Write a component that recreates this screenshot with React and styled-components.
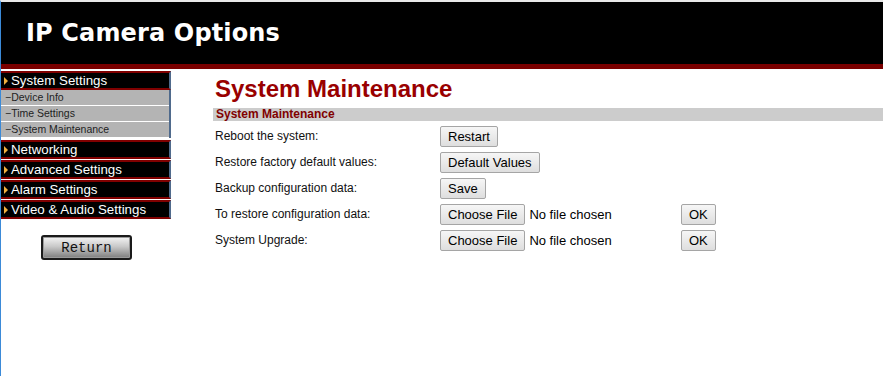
import React from "react";
import styled, { createGlobalStyle } from "styled-components";

const GlobalStyle = createGlobalStyle`
  html, body {
    margin: 0;
    padding: 0;
    background: #fff;
  }
  body {
    font-family: "Liberation Sans", Arial, sans-serif;
  }
`;

const Page = styled.div`
  width: 883px;
  height: 376px;
  box-sizing: border-box;
  border-left: 1px solid #3b8ad8;
  border-top: 2px solid #e8e8e8;
  overflow: hidden;
`;

const Header = styled.header`
  height: 62px;
  background: #000;
  border-bottom: 5px solid #7a0000;
  display: flex;
  align-items: center;
  padding-left: 25px;
  h1 {
    margin: 0;
    color: #fff;
    font-family: "DejaVu Sans", Verdana, sans-serif;
    font-size: 24px;
    font-weight: bold;
    letter-spacing: 0.15px;
    padding-bottom: 1px;
  }
`;

const Body = styled.div`
  display: flex;
`;

const Sidebar = styled.nav`
  width: 170px;
  padding-top: 2px;
  display: flex;
  flex-direction: column;
`;

const MenuItem = styled.div`
  height: 15px;
  background: #000;
  border-top: 2px solid #800000;
  border-bottom: 2px solid #800000;
  border-right: 2px solid #4f6a8c;
  margin-bottom: 1px;
  display: flex;
  align-items: center;
  padding-left: 3px;
  color: #fff;
  font-size: 13.3px;
  line-height: 15px;
  &::before {
    content: "";
    width: 0;
    height: 0;
    border-top: 4px solid transparent;
    border-bottom: 4px solid transparent;
    border-left: 4px solid #f0b040;
    margin-right: 3px;
  }
`;

const SubMenu = styled.div`
  display: flex;
  flex-direction: column;
  margin-top: -1px;
  margin-bottom: 2px;
  border-right: 2px solid #4f6a8c;
`;

const SubItem = styled.div`
  height: 15px;
  background: #b4b4b4;
  border-bottom: 1px solid #fff;
  font-size: 10.5px;
  line-height: 15px;
  color: #222;
  padding-left: 4px;
`;

const ReturnWrap = styled.div`
  display: flex;
  justify-content: center;
  padding-top: 15px;
  padding-left: 1px;
`;

const ReturnButton = styled.button`
  width: 91px;
  height: 25px;
  border: 2px solid #1a1a1a;
  border-radius: 3px;
  background: linear-gradient(#f4f4f4 0%, #c9c9c9 45%, #7d7d7d 100%);
  box-shadow: inset 0 0 0 1px #9a9a9a;
  font-family: "Liberation Mono", "Courier New", monospace;
  font-size: 14px;
  color: #111;
  padding: 0;
`;

const Main = styled.main`
  flex: 1;
  padding-left: 44px;
  padding-top: 6px;
`;

const Title = styled.h2`
  margin: 0;
  font-size: 24px;
  font-weight: bold;
  color: #990000;
  line-height: 28px;
`;

const SectionBar = styled.div`
  margin-top: 5px;
  margin-left: -2px;
  height: 13px;
  background: #cccccc;
  padding-left: 3px;
  font-size: 12px;
  font-weight: bold;
  color: #800000;
  line-height: 13px;
`;

const Rows = styled.div`
  padding-top: 2px;
  display: flex;
  flex-direction: column;
`;

const Row = styled.div`
  height: 26px;
  display: grid;
  grid-template-columns: 225px 241px auto;
  align-items: center;
  font-size: 12px;
  color: #111;
`;

const Controls = styled.div`
  display: flex;
  align-items: center;
  gap: 4px;
  font-size: 13px;
  color: #000;
`;

const Btn = styled.button`
  height: 21px;
  padding: 0 7px;
  border: 1px solid #a5a5a5;
  border-radius: 2px;
  background: linear-gradient(#f6f6f6, #dedede);
  font-family: "Liberation Sans", Arial, sans-serif;
  font-size: 13px;
  color: #000;
  justify-self: start;
`;

const rows = [
  { label: "Reboot the system:", button: "Restart" },
  { label: "Restore factory default values:", button: "Default Values" },
  { label: "Backup configuration data:", button: "Save" },
  { label: "To restore configuration data:", file: true },
  { label: "System Upgrade:", file: true },
];

export default function App() {
  return (
    <Page>
      <GlobalStyle />
      <Header>
        <h1>IP Camera Options</h1>
      </Header>
      <Body>
        <Sidebar>
          <MenuItem>System Settings</MenuItem>
          <SubMenu>
            <SubItem>−Device Info</SubItem>
            <SubItem>−Time Settings</SubItem>
            <SubItem>−System Maintenance</SubItem>
          </SubMenu>
          <MenuItem>Networking</MenuItem>
          <MenuItem>Advanced Settings</MenuItem>
          <MenuItem>Alarm Settings</MenuItem>
          <MenuItem>Video &amp; Audio Settings</MenuItem>
          <ReturnWrap>
            <ReturnButton>Return</ReturnButton>
          </ReturnWrap>
        </Sidebar>
        <Main>
          <Title>System Maintenance</Title>
          <SectionBar>System Maintenance</SectionBar>
          <Rows>
            {rows.map((r) => (
              <Row key={r.label}>
                <span>{r.label}</span>
                {r.file ? (
                  <>
                    <Controls>
                      <Btn>Choose File</Btn>
                      <span>No file chosen</span>
                    </Controls>
                    <Btn>OK</Btn>
                  </>
                ) : (
                  <Btn>{r.button}</Btn>
                )}
              </Row>
            ))}
          </Rows>
        </Main>
      </Body>
    </Page>
  );
}
